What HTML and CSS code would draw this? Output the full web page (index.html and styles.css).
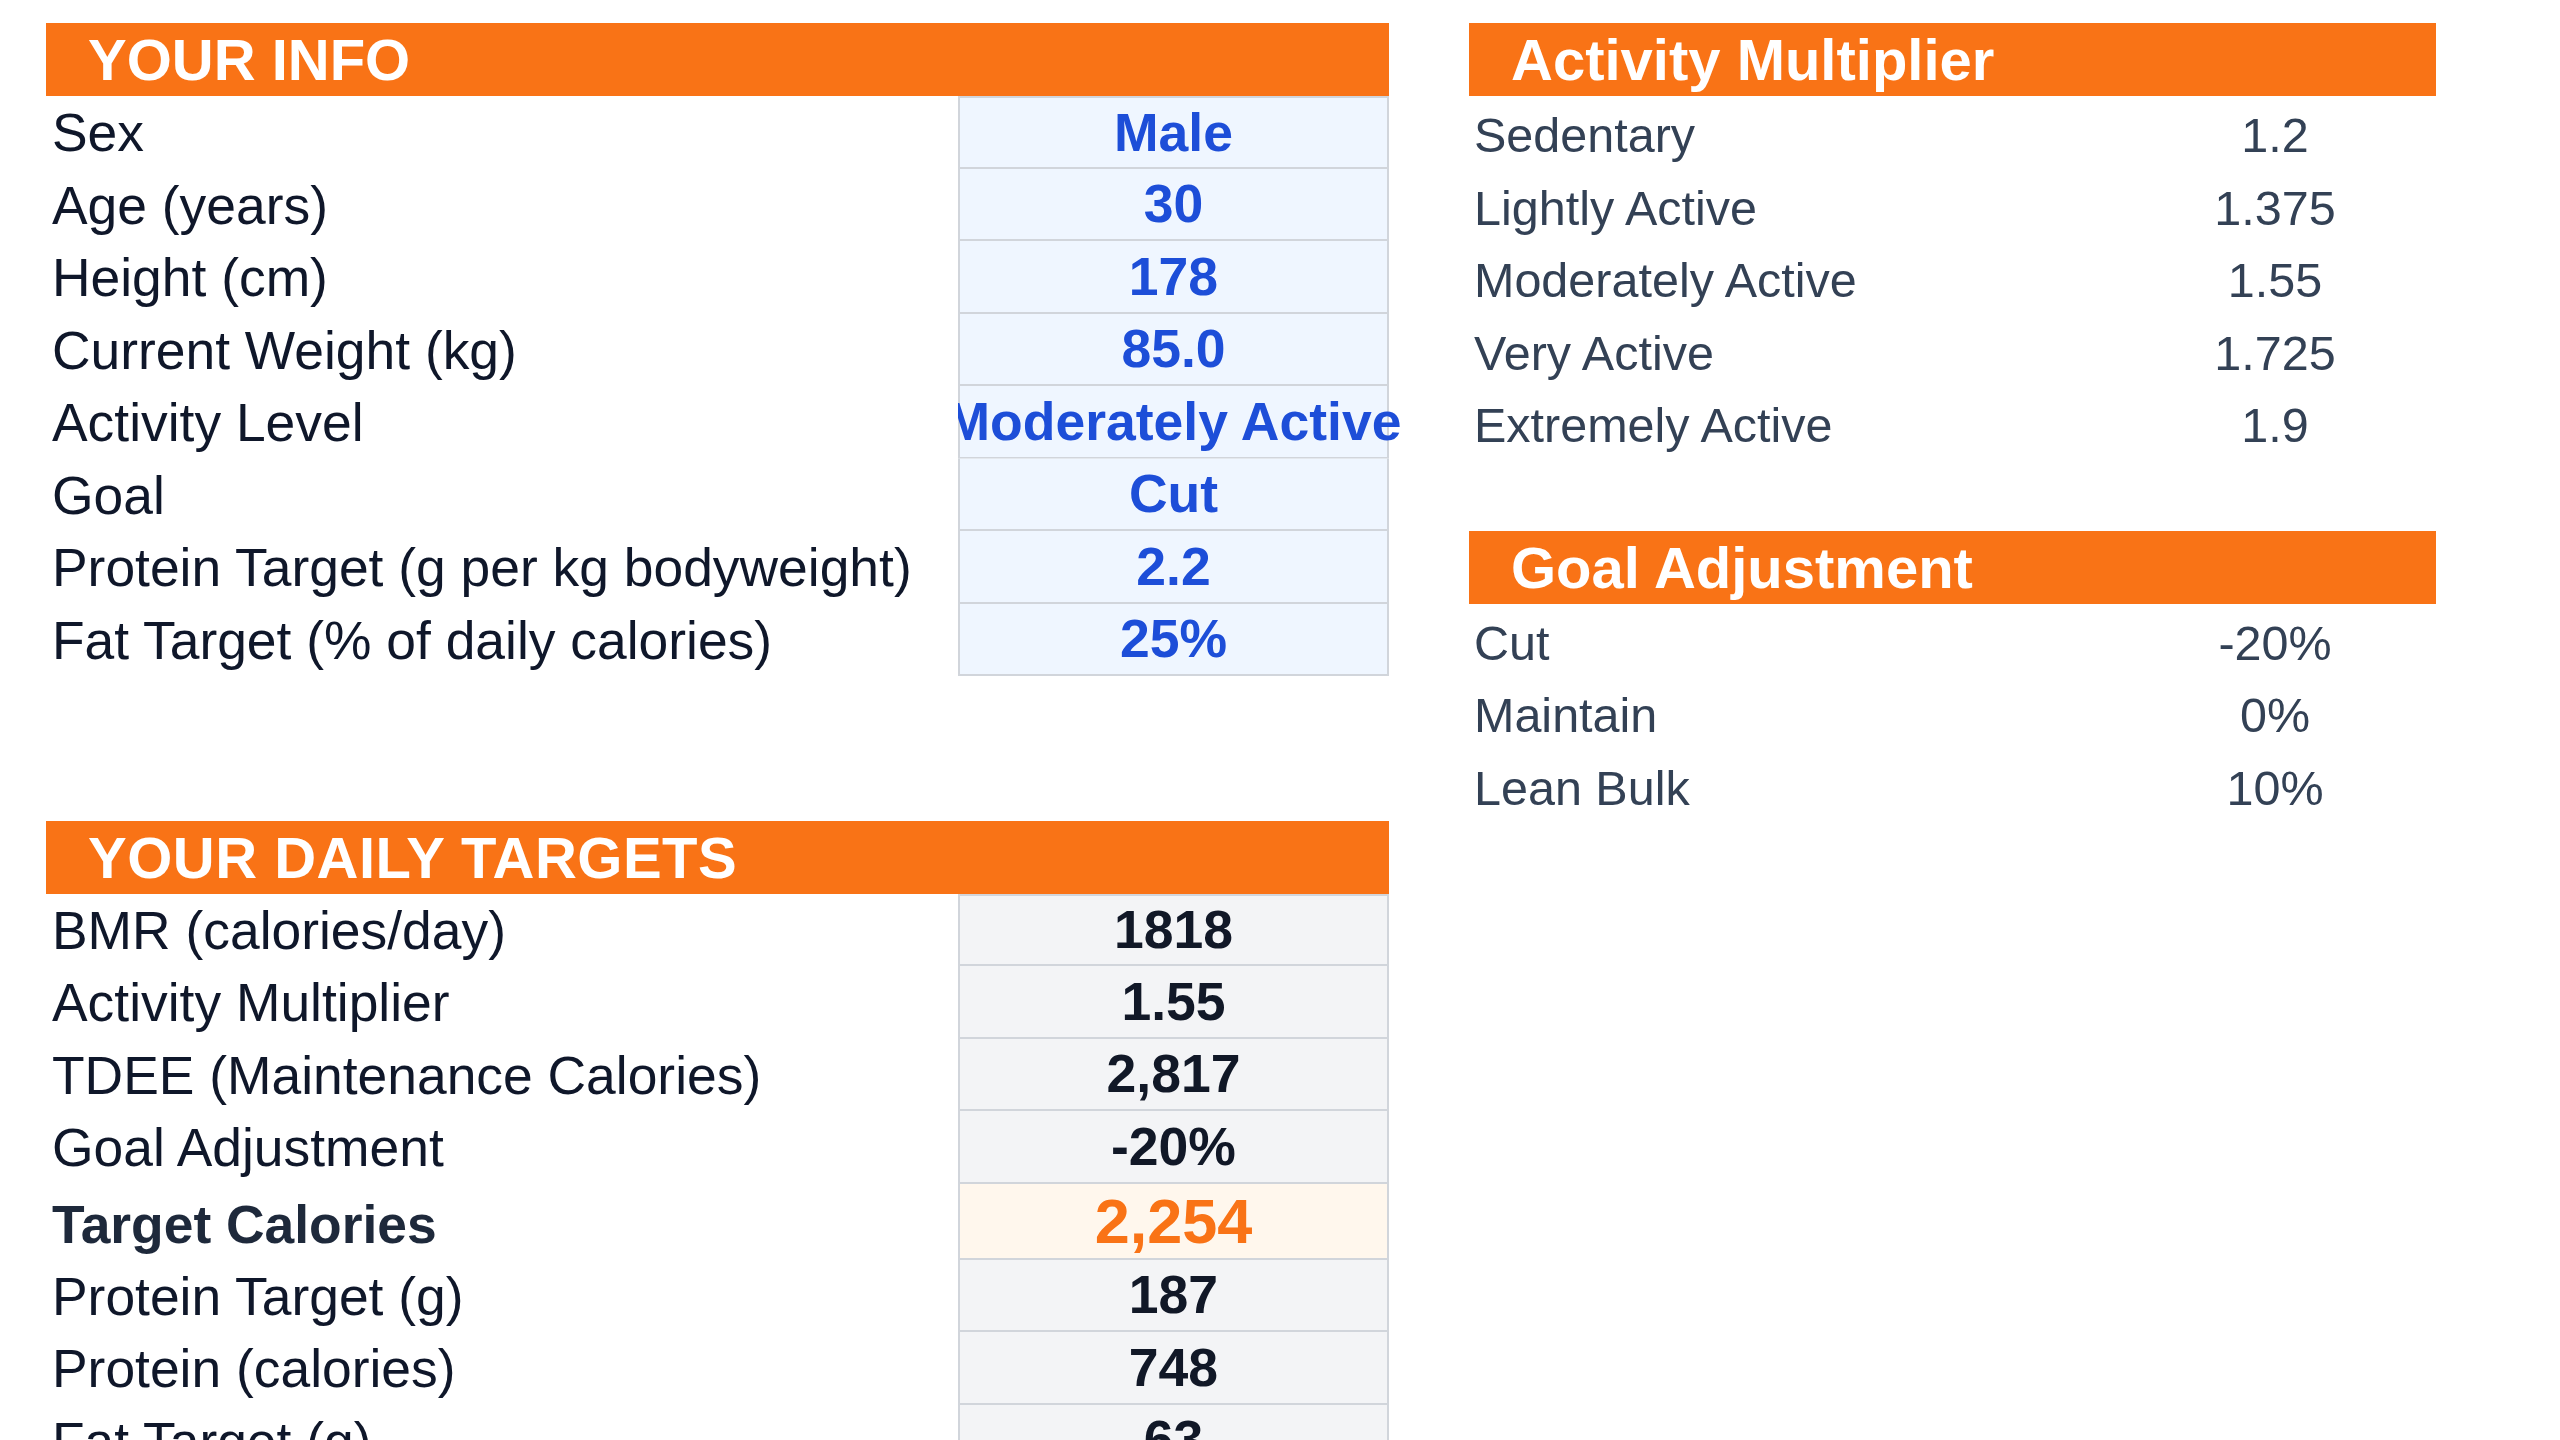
FILE: index.html
```html
<!DOCTYPE html>
<html lang="en">
<head>
<meta charset="utf-8">
<title>Macro Calculator</title>
<link rel="stylesheet" href="styles.css">
</head>
<body>
<div class="sheet">
  <div class="col-left">
    <section class="block">
      <div class="band">YOUR INFO</div>
      <div class="row"><div class="label">Sex</div><div class="val input first">Male</div></div>
      <div class="row"><div class="label">Age (years)</div><div class="val input">30</div></div>
      <div class="row"><div class="label">Height (cm)</div><div class="val input">178</div></div>
      <div class="row"><div class="label">Current Weight (kg)</div><div class="val input">85.0</div></div>
      <div class="row"><div class="label">Activity Level</div><div class="val input clip-left">Moderately Active</div></div>
      <div class="row"><div class="label">Goal</div><div class="val input">Cut</div></div>
      <div class="row"><div class="label">Protein Target (g per kg bodyweight)</div><div class="val input">2.2</div></div>
      <div class="row"><div class="label">Fat Target (% of daily calories)</div><div class="val input">25%</div></div>
    </section>

    <section class="block targets">
      <div class="band band-wide">YOUR DAILY TARGETS</div>
      <div class="row"><div class="label">BMR (calories/day)</div><div class="val calc first">1818</div></div>
      <div class="row"><div class="label">Activity Multiplier</div><div class="val calc">1.55</div></div>
      <div class="row"><div class="label">TDEE (Maintenance Calories)</div><div class="val calc">2,817</div></div>
      <div class="row"><div class="label">Goal Adjustment</div><div class="val calc">-20%</div></div>
      <div class="row row-tall"><div class="label label-strong">Target Calories</div><div class="val highlight">2,254</div></div>
      <div class="row"><div class="label">Protein Target (g)</div><div class="val calc">187</div></div>
      <div class="row"><div class="label">Protein (calories)</div><div class="val calc">748</div></div>
      <div class="row"><div class="label">Fat Target (g)</div><div class="val calc">63</div></div>
      <div class="row"><div class="label">Fat (calories)</div><div class="val calc">564</div></div>
      <div class="row"><div class="label">Carb Target (g)</div><div class="val calc">236</div></div>
      <div class="row"><div class="label">Carbs (calories)</div><div class="val calc">942</div></div>
    </section>
  </div>

  <div class="col-right">
    <section class="block">
      <div class="band band-ref">Activity Multiplier</div>
      <div class="ref-row"><div class="ref-label">Sedentary</div><div class="ref-val">1.2</div></div>
      <div class="ref-row"><div class="ref-label">Lightly Active</div><div class="ref-val">1.375</div></div>
      <div class="ref-row"><div class="ref-label">Moderately Active</div><div class="ref-val">1.55</div></div>
      <div class="ref-row"><div class="ref-label">Very Active</div><div class="ref-val">1.725</div></div>
      <div class="ref-row"><div class="ref-label">Extremely Active</div><div class="ref-val">1.9</div></div>
    </section>

    <section class="block goal">
      <div class="band band-ref">Goal Adjustment</div>
      <div class="ref-row"><div class="ref-label">Cut</div><div class="ref-val">-20%</div></div>
      <div class="ref-row"><div class="ref-label">Maintain</div><div class="ref-val">0%</div></div>
      <div class="ref-row"><div class="ref-label">Lean Bulk</div><div class="ref-val">10%</div></div>
    </section>
  </div>
</div>
</body>
</html>
```

FILE: styles.css
```css
* {
  box-sizing: border-box;
}

html, body {
  margin: 0;
  padding: 0;
  background: #ffffff;
}

body {
  font-family: "Liberation Sans", Arial, sans-serif;
  color: #0f172a;
}

.sheet {
  display: flex;
  align-items: flex-start;
  gap: 80px;
  padding: 23px 0 0 46px;
}

.col-left {
  width: 1343px;
  display: flex;
  flex-direction: column;
}

.col-right {
  width: 967px;
  display: flex;
  flex-direction: column;
}

.targets {
  margin-top: 144.5px;
}

.goal {
  margin-top: 72px;
}

.band {
  height: 73px;
  background: #f97316;
  color: #ffffff;
  font-weight: 700;
  font-size: 58px;
  display: flex;
  align-items: center;
  padding-left: 42px;
  white-space: nowrap;
}

.band-wide {
  letter-spacing: 0.5px;
}

.band-ref {
  padding-left: 42px;
}

.row {
  display: grid;
  grid-template-columns: 912px 431px;
  height: 72.5px;
}

.row-tall {
  height: 76px;
}

.label {
  display: flex;
  align-items: center;
  padding: 1px 0 0 6px;
  font-size: 53.4px;
  color: #0f172a;
  white-space: nowrap;
}

.label-strong {
  font-weight: 700;
  color: #1e293b;
  padding-top: 6px;
}

.val {
  display: flex;
  align-items: center;
  justify-content: center;
  font-size: 53.5px;
  font-weight: 700;
  white-space: nowrap;
  border-left: 2px solid #d1d5db;
  border-right: 2px solid #d1d5db;
  border-bottom: 2px solid #d1d5db;
}

.val.first {
  border-top: 2px solid #d1d5db;
}

.input {
  background: #eff6ff;
  color: #1d4ed8;
}

.calc {
  background: #f3f4f6;
  color: #111827;
}

.highlight {
  background: #fff7ed;
  color: #f97316;
  font-size: 63px;
}

.clip-left {
  clip-path: inset(0 -200px 0 0);
}

.ref-row {
  display: grid;
  grid-template-columns: 645px 322px;
  height: 72.5px;
  font-size: 48.5px;
  color: #334155;
}

.ref-label {
  display: flex;
  align-items: center;
  padding: 6px 0 0 5px;
  white-space: nowrap;
}

.ref-val {
  display: flex;
  align-items: center;
  justify-content: center;
  padding-top: 6px;
  white-space: nowrap;
}
```
